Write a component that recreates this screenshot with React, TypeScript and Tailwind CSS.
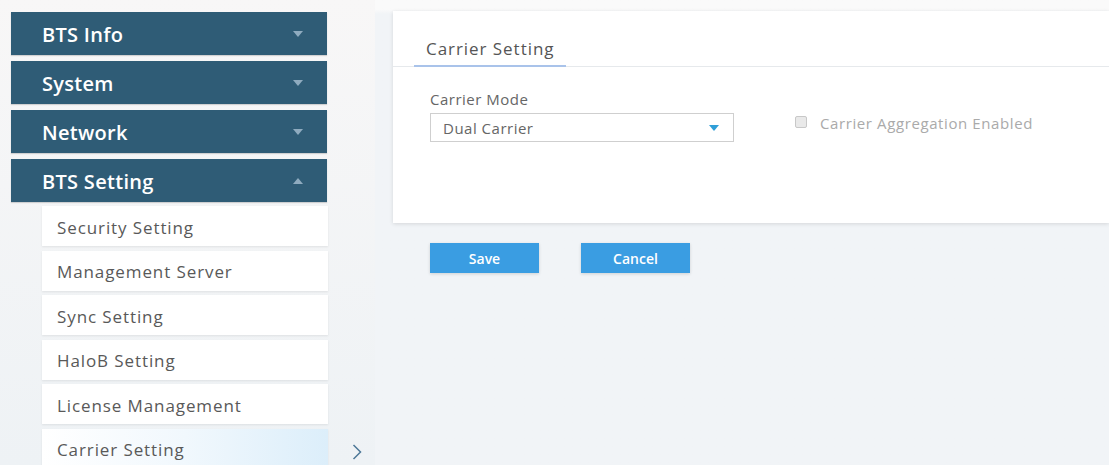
import React, { useState } from 'react';

const menuGroups = ['BTS Info', 'System', 'Network'];

const subItems = [
  'Security Setting',
  'Management Server',
  'Sync Setting',
  'HaloB Setting',
  'License Management',
  'Carrier Setting',
];

const Caret: React.FC<{ up?: boolean; className?: string }> = ({ up, className }) => (
  <svg width="10" height="6" viewBox="0 0 10 6" className={className}>
    {up ? <path d="M0 6 L5 0 L10 6 Z" fill="currentColor" /> : <path d="M0 0 L10 0 L5 6 Z" fill="currentColor" />}
  </svg>
);

const GroupBar: React.FC<{ label: string; open?: boolean }> = ({ label, open }) => (
  <div className="h-[43px] w-[316px] bg-[#2f5c76] flex items-center justify-between pl-[31px] pr-[24px] shadow-[0_1px_1px_rgba(0,0,0,0.15)]">
    <span className="text-[20px] font-semibold text-white tracking-[0.3px] mt-[3px]">{label}</span>
    <Caret up={open} className="text-[#8fabbf]" />
  </div>
);

const App: React.FC = () => {
  const [active] = useState('Carrier Setting');
  const [mode] = useState('Dual Carrier');
  const [aggregation, setAggregation] = useState(false);

  return (
    <div
      className="w-[1109px] h-[465px] overflow-hidden flex bg-[#f1f4f7] text-[#555]"
      style={{ fontFamily: '"Open Sans", "Noto Sans", Arial, sans-serif' }}
    >
      {/* Left navigation */}
      <aside className="w-[375px] shrink-0 pt-[12px] pl-[11px] bg-gradient-to-b from-[#f8f7f7] to-[#eef2f5]">
        <div className="flex flex-col gap-[6px]">
          {menuGroups.map(g => (
            <GroupBar key={g} label={g} />
          ))}
          <GroupBar label="BTS Setting" open />
        </div>
        <ul className="mt-[4px] flex flex-col gap-[4.5px]">
          {subItems.map(item => {
            const isActive = item === active;
            return (
              <li key={item} className="flex items-center">
                <div
                  className={`ml-[31px] w-[286px] shrink-0 h-[40px] flex items-center pl-[15px] pt-[3px] text-[17px] tracking-[0.9px] text-[#595959] shadow-[0_1px_2px_rgba(0,0,0,0.08)] ${
                    isActive ? 'bg-gradient-to-r from-white via-[#f1f8fd] to-[#dceefa]' : 'bg-white'
                  }`}
                >
                  {item}
                </div>
                {isActive && (
                  <svg width="10" height="16" viewBox="0 0 10 16" className="shrink-0 ml-[24px] mt-[6px]">
                    <path d="M1.5 1 L8.5 8 L1.5 15" stroke="#4d7898" strokeWidth="1.5" fill="none" />
                  </svg>
                )}
              </li>
            );
          })}
        </ul>
      </aside>

      {/* Main content */}
      <main className="flex-1 pl-[18px] pt-[11px] bg-gradient-to-b from-[#fafafa] from-[2%] to-[#f1f4f7] to-[3%]">
        <section className="h-[212px] bg-white shadow-[0_1px_4px_rgba(0,0,0,0.12)]">
          <div className="h-[56px] border-b border-[#e6e9ec] pl-[21px] flex items-end">
            <div className="px-[12px] pb-[4px] border-b-2 border-[#a9c3ea] -mb-px">
              <span className="text-[17px] tracking-[0.95px] text-[#555]">Carrier Setting</span>
            </div>
          </div>
          <div className="pl-[37px] pt-[22px] flex items-end">
            <div className="flex flex-col">
              <label className="text-[15px] tracking-[0.5px] text-[#666] leading-[20px] mb-[4px]">Carrier Mode</label>
              <div className="w-[304px] h-[29px] border border-[#cfcfcf] flex items-center justify-between pl-[12px] pr-[14px]">
                <span className="text-[15px] tracking-[0.5px] text-[#666] mt-[2px]">{mode}</span>
                <Caret className="text-[#2f9fd8]" />
              </div>
            </div>
            <label className="ml-[61px] mb-[8px] flex items-center gap-[13px] cursor-pointer">
              <span
                onClick={() => setAggregation(v => !v)}
                className={`w-[12px] h-[12px] border border-[#c8c8c8] rounded-[2px] ${aggregation ? 'bg-[#3a9de2]' : 'bg-[#e9e9e9]'}`}
              />
              <span className="text-[15px] tracking-[0.6px] text-[#aaa] mt-[2px]">Carrier Aggregation Enabled</span>
            </label>
          </div>
        </section>

        <div className="mt-[20px] pl-[37px] flex gap-[42px]">
          <button className="w-[109px] h-[30px] bg-[#3a9de2] text-white text-[14px] font-semibold shadow-[0_1px_3px_rgba(0,0,0,0.15)]">
            Save
          </button>
          <button className="w-[109px] h-[30px] bg-[#3a9de2] text-white text-[14px] font-semibold shadow-[0_1px_3px_rgba(0,0,0,0.15)]">
            Cancel
          </button>
        </div>
      </main>
    </div>
  );
};

export default App;
